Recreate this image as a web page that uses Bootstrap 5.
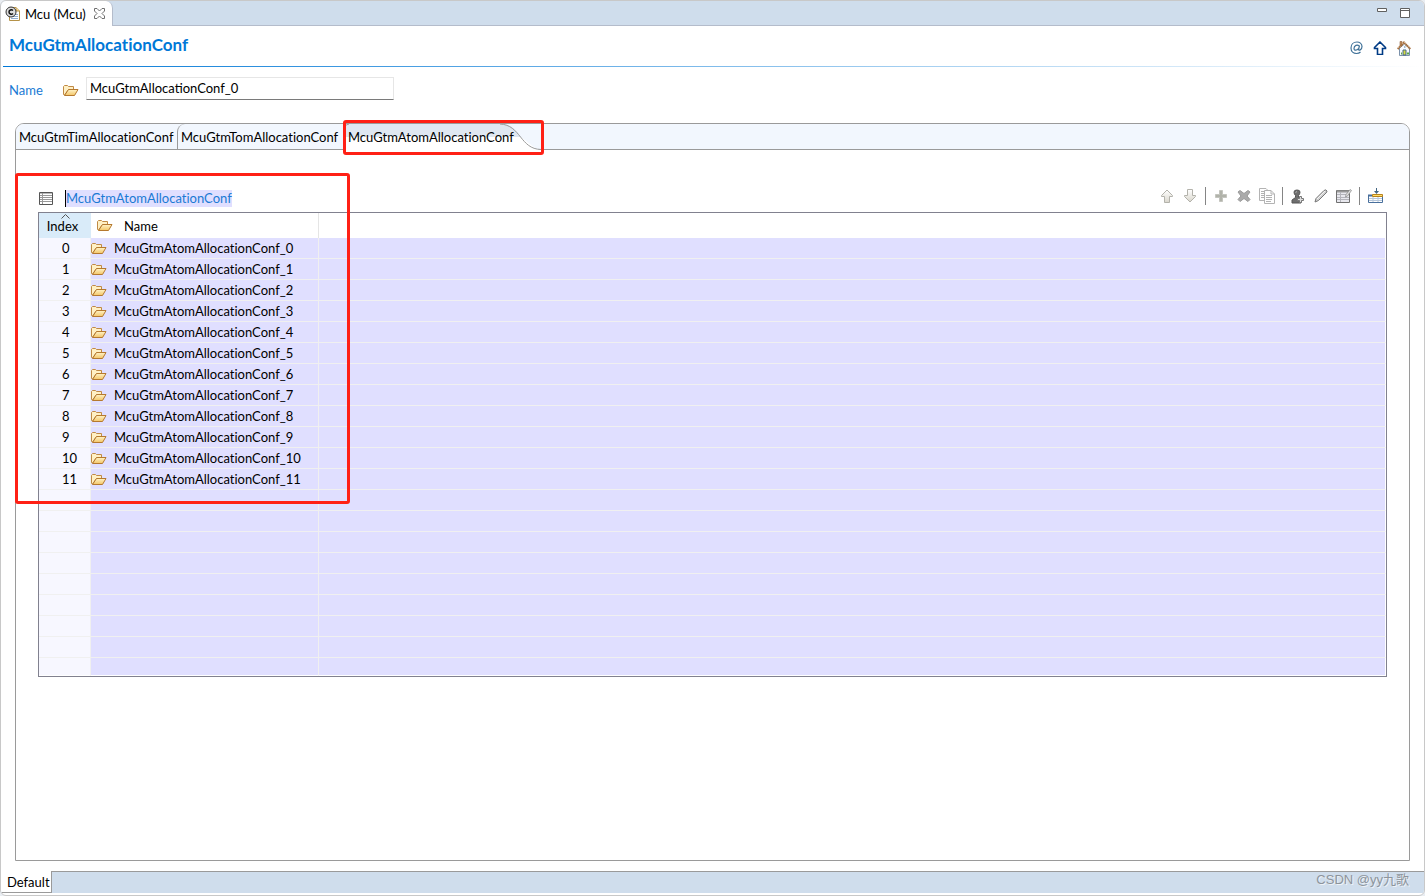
<!DOCTYPE html>
<html lang="en">
<head>
<meta charset="utf-8">
<meta name="viewport" content="width=device-width, initial-scale=1">
<title>McuGtmAllocationConf</title>
<link href="https://cdn.jsdelivr.net/npm/bootstrap@5.3.0/dist/css/bootstrap.min.css" rel="stylesheet">
<style>
  body { font-family: Lato, "Noto Sans CJK SC", sans-serif; font-size: 13px; line-height: 20px; font-variant-ligatures: none; color: #000; background: #e9edf2; }
  button { font: inherit; color: inherit; }
  svg { display: block; flex: none; }
  .editor { border: 1px solid #c8c8c8; border-radius: 6px; overflow: hidden; background: #fff; }
  .strip { background: #cfddec; height: 25px; border-bottom: 1px solid #b4bccb; }
  .editor-tab { background: #fff; height: 25px; width: 112px; gap: 4px; padding: 0 0 0 4px; border-right: 1px solid #b4bccb; border-radius: 5px 7px 0 0; white-space: nowrap; }
  .icon-btn { border: 0; background: none; padding: 0; }
  .window-buttons { gap: 13px; padding-right: 14px; }
  .heading { font-size: 17px; line-height: 22px; font-weight: 700; color: #0078d7; padding-bottom: 2px; }
  .page-links { gap: 8px; margin-right: 12px; }
  .page-links a, .tools .icon-btn { width: 16px; display: flex; justify-content: center; }
  .rule { height: 1px; background: linear-gradient(90deg, #0078d7, #fff); margin-left: 2px; }
  .name-row { padding: 9px 0 0 8px; }
  .name-label { color: #1a7ad4; width: 54px; }
  .icon-gap { margin-right: 7px; }
  .name-input { width: 308px; height: 23px; padding: 0 3px; border: 1px solid #e6e6e6; border-bottom-color: #7a7a7a; border-radius: 0; font-size: 13px; color: #000; background: #fff; }
  .folder { border: 1px solid #9a9a9a; border-radius: 9px 9px 0 0; margin: 23px 14px 10px; }
  .folder-tabs { background: #f2f7fe; height: 26px; border-bottom: 1px solid #9a9a9a; border-radius: 8px 8px 0 0; }
  .folder-tab { border: 0; background: none; height: 25px; padding: 0 0 0 3px; text-align: left; white-space: nowrap; }
  .tab-tim { width: 161px; }
  .tab-tom { width: 166px; border-left: 1px solid #9a9a9a; border-radius: 8px 0 0 0; }
  .tab-atom { width: 201px; height: 25px; padding-left: 5px; }
  .tab-shape { position: absolute; left: 0; top: 0; }
  .callout { position: absolute; border: 3px solid #ff2015; border-radius: 3px; pointer-events: none; z-index: 2; }
  .callout-tab { inset: -4px 0 -6px 0; }
  .callout-table { left: -1px; top: 23px; width: 335px; height: 331px; }
  .section-body { padding: 37px 22px 0; }
  .section-head { padding-top: 3px; }
  .section-title { color: #1a7ad4; background: #e0dfff; border-left: 1px solid #000; line-height: 17px; }
  .tools { gap: 7px; }
  .sep { width: 1px; height: 18px; background: #858585; }
  .conf-table { width: 100%; table-layout: fixed; border: 1px solid #81818f; border-collapse: separate; border-spacing: 0; margin-top: 5px; }
  .conf-table th { height: 25px; padding: 0; font-weight: 400; border-right: 1px solid #e5e5e5; vertical-align: middle; }
  .conf-table th:first-child { background: #d9ebf9; text-align: center; border-right: 0; padding-right: 5px; line-height: 20px; }
  .conf-table th:last-child { border-right: 0; }
  .conf-table td { height: 21px; padding: 0; background: #e0dfff; border-bottom: 1px solid #f0f0f0; border-right: 1px solid #f0f0f0; line-height: 20px; }
  .conf-table td:first-child { background: #f7f7ff; text-align: left; padding-left: 23px; }
  .conf-table td:last-child { border-right-color: #fff; }
  .conf-table tr:last-child td { height: 18px; border-bottom-color: #fff; }
  .head-cell { padding-left: 6px; }
  .sort-mark { position: absolute; left: 22px; top: 1px; }
  .bottom { height: 22px; background: #cfddec; border-top: 1px solid #9a9a9a; margin-bottom: 2px; }
  .bottom-tab { background: #fff; width: 51px; height: 22px; margin-top: -1px; padding: 0 0 0 6px; border: 0; border-right: 1px solid #9a9a9a; border-bottom: 1px solid #9a9a9a; text-align: left; line-height: 20px; }
  .watermark { font-family: "Liberation Sans", "Noto Sans CJK SC", sans-serif; font-size: 13px; line-height: 16px; color: #8d949c; text-shadow: 1px 1px 0 #eef2f6; margin-right: 15px; white-space: nowrap; }
</style>
</head>
<body>
<svg width="0" height="0" class="position-absolute" aria-hidden="true">
  <defs>
    <linearGradient id="gold" x1="0" y1="0" x2="0" y2="1"><stop offset="0" stop-color="#fff3c8"/><stop offset="1" stop-color="#f3c667"/></linearGradient>
    <linearGradient id="stone" x1="0" y1="0" x2="0" y2="1"><stop offset="0" stop-color="#fff"/><stop offset="1" stop-color="#d9d6cc"/></linearGradient>
    <symbol id="folder" viewBox="0 0 16 13">
      <path d="M.5 10.500V2.500L1.500 1.500H4.500L5.500 2.500H10.500V5.500H5.500L1.500 11Z" fill="#fff0c4" stroke="#c08a45"/>
      <path d="M1.500 11.500L5.500 5.500H15L11.500 11.500Z" fill="url(#gold)" stroke="#b5792f"/>
    </symbol>
    <symbol id="up" viewBox="0 0 14 14"><path d="M7 1L12.500 6.500V7.500H9.500V13.500H4.500V7.500H1.500V6.500Z"/></symbol>
  </defs>
</svg>
<div class="editor d-flex flex-column min-vh-100">
  <div class="strip d-flex">
    <div class="editor-tab d-flex align-items-center">
      <svg width="16" height="16" viewBox="0 0 16 16"><path d="M4.500 1.500H11L14.500 5V14.500H4.500Z" fill="#fff" stroke="#b59248"/><path d="M11 1.500V5H14.500" fill="#f6d996" stroke="#b59248"/><path d="M6 10.500H13M6 12.500H13M10 8.500H13" stroke="#91add0"/><circle cx="6" cy="6" r="5" fill="#ddd" stroke="#333"/><path d="M8 4.500C6.500 3 4 4 4 6S6.500 9 8 7.500" fill="none" stroke="#111" stroke-width="1.500"/></svg>
      <span>Mcu (Mcu)</span>
      <button class="icon-btn ms-1" aria-label="Close"><svg width="11" height="11" viewBox="0 0 11 11" fill="#fff" stroke="#707070"><path d="M.5.5H3L5.500 3 8 .5H10.500V3L8 5.500 10.500 8V10.500H8L5.500 8 3 10.500H.5V8L3 5.500.5 3Z"/></svg></button>
    </div>
    <div class="window-buttons ms-auto d-flex">
      <button class="icon-btn" aria-label="Minimize"><svg width="10" height="16" viewBox="0 0 10 16"><path d="M.5 3.500H9.500V6.500H.5Z" fill="#fff" stroke="#606060"/></svg></button>
      <button class="icon-btn" aria-label="Maximize"><svg width="10" height="16" viewBox="0 0 10 16"><path d="M.5 3.500H9.500V12.500H.5ZM0 5.500H10" fill="#fff" stroke="#606060"/></svg></button>
    </div>
  </div>
  <header class="d-flex justify-content-between align-items-center ps-2 py-2">
    <h1 class="heading m-0">McuGtmAllocationConf</h1>
    <div class="page-links d-flex align-items-center pt-1">
      <a href="#" aria-label="References"><svg width="15" height="14" viewBox="0 0 15 14" fill="none" stroke="#3f7198" stroke-width="1.200"><path d="M10.500 4.500L9.500 8.500C9.500 10 13 9 13 5.500C13 2.500 10.500 1 8 1C4.500 1 2 3.500 2 7C2 10.500 4.500 12.500 7.500 12.500C9 12.500 10.500 12 11.500 11"/><path d="M10 5C8.500 3 5 4.500 5 7.500C5 10 8 9.500 9.500 7.500"/></svg></a>
      <a href="#" aria-label="Up"><svg width="14" height="14" fill="#fff" stroke="#003b85" stroke-width="1.600"><use href="#up"/></svg></a>
      <a href="#" aria-label="Home"><svg width="14" height="15" viewBox="0 0 14 15"><path d="M2.500 7V14.500H12.500V7L7.500 3Z" fill="#f8fbff" stroke="#7b91aa"/><path d="M3 .5H5V5H3Z" fill="#c79463" stroke="#8b6040" stroke-width=".6"/><path d="M.7 8L7 1.500 13.300 8" fill="none" stroke="#a8703d" stroke-width="2" stroke-dasharray="1.500 .4"/><path d="M6 9H9V14H6Z" fill="#d6da43" stroke="#49698b"/><path d="M7 6H8.500" stroke="#4d80ad"/><path d="M4 12.500H5M10 12.500H12" stroke="#56a446" stroke-width="2"/></svg></a>
    </div>
  </header>
  <div class="rule"></div>
  <div class="name-row d-flex align-items-center">
    <label class="name-label pt-1" for="confName">Name</label>
    <svg width="16" height="13" class="icon-gap mt-1"><use href="#folder"/></svg>
    <input id="confName" class="name-input" value="McuGtmAllocationConf_0">
  </div>
  <main class="folder flex-grow-1 d-flex flex-column">
    <div class="folder-tabs d-flex" role="tablist">
      <button class="folder-tab tab-tim" role="tab">McuGtmTimAllocationConf</button>
      <button class="folder-tab tab-tom" role="tab">McuGtmTomAllocationConf</button>
      <div class="position-relative">
        <svg class="tab-shape" width="201" height="26" viewBox="0 0 201 26"><path d="M0 13V8Q0 0 5 0H162Q171 2 178 13Z" fill="#dfe7f1"/><path d="M0 13H178L187 20Q192 25 199 26H0Z" fill="#fff"/><path d="M.5 26V8Q.5 1 6 0M157 0C178 1 177 25 198 25.500" fill="none" stroke="#9a9a9a"/></svg>
        <button class="folder-tab tab-atom position-relative" role="tab" aria-selected="true">McuGtmAtomAllocationConf</button>
        <div class="callout callout-tab"></div>
      </div>
    </div>
    <div class="section-body position-relative">
      <div class="callout callout-table"></div>
      <div class="d-flex justify-content-between align-items-start">
        <div class="section-head d-flex align-items-center">
          <svg class="me-2" width="15" height="13" viewBox="0 0 15 13"><path d="M1.500.5H14.500V12.500H1.500Z" fill="#fff" stroke="#555"/><path d="M2 1.500H14" stroke="#bbb"/><path d="M2 3.500H14M2 5.500H14M2 7.500H14M2 9.500H14M4.500 1V12" stroke="#999"/></svg>
          <span class="section-title ms-1">McuGtmAtomAllocationConf</span>
        </div>
        <div class="tools d-flex align-items-center me-1">
          <button class="icon-btn" aria-label="Move up"><svg width="14" height="14" fill="url(#stone)" stroke="#b3b2ab"><use href="#up"/></svg></button>
          <button class="icon-btn" aria-label="Move down"><svg width="14" height="14" viewBox="0 0 14 14"><path d="M7 13L12.500 7.500V6.500H9.500V.5H4.500V6.500H1.500V7.500Z" fill="url(#stone)" stroke="#b3b2ab"/></svg></button>
          <span class="sep"></span>
          <button class="icon-btn" aria-label="Add"><svg width="14" height="14" viewBox="0 0 14 14"><path d="M5.500 1.500H8.500V5.500H12.500V8.500H8.500V12.500H5.500V8.500H1.500V5.500H5.500Z" fill="#b1b3aa" stroke="#c4c5bf"/></svg></button>
          <button class="icon-btn" aria-label="Delete"><svg width="14" height="14" viewBox="0 0 14 14"><path d="M1 3L3 1.500 7 4.500 11 1.500 13 3 10 7 13 10.500 11 12.500 7 9.500 3 12.500 1 10.500 4 7Z" fill="#aaa" stroke="#999"/></svg></button>
          <button class="icon-btn" aria-label="Duplicate"><svg width="16" height="16" viewBox="0 0 16 16" fill="#fff" stroke="#b3b3b3"><path d="M.5.500H7L9.500 3V12.500H.5Z"/><path d="M2 3.500H6M2 5.500H6M2 7.500H6M2 9.500H6"/><path d="M5.500 2.500H12L15.500 6V15.500H5.500ZM12 2.500V6H15.500M7 7.500H13M7 9.500H13M7 11.500H13M7 13.500H12"/></svg></button>
          <span class="sep"></span>
          <button class="icon-btn" aria-label="Import"><svg width="14" height="15" viewBox="0 0 14 15"><path d="M1 14V11L4.500 8.500V6.500Q3 5 3 3Q3 1 6 1T9 3Q9 5 7.500 6.500V8.500L10 11V14Z" fill="#6e6e6e" stroke="#555"/><path d="M4.500 3.500L6 2.500" stroke="#bbb"/><path d="M8.500 7.500H10.500V9.500H12.500V11.500H10.500V13.500H8.500V11.500H6.500V9.500H8.500Z" fill="#ddd" stroke="#777"/></svg></button>
          <button class="icon-btn" aria-label="Edit"><svg width="14" height="14" viewBox="0 0 14 14"><path d="M1 13L2 9.500 10 1.500Q12 0 13 2Q13 3 12 4L4.500 11.500Z" fill="#d2d2d2" stroke="#777"/><path d="M3 10L11 2" stroke="#f5f5f5"/></svg></button>
          <button class="icon-btn" aria-label="Edit table"><svg width="16" height="14" viewBox="0 0 16 14"><path d="M.5 1.500H13.500V13.500H.5Z" fill="#e8e8ee" stroke="#707070"/><path d="M1 2.500H13" stroke="#999" stroke-width="2"/><path d="M1 5.500H13M1 8.500H13M1 10.500H13M4.500 3V13" stroke="#b4b4bb"/><path d="M9.500 8L10 5.500 14 .500 15.500 1.500 11.500 7Z" fill="#ddd" stroke="#8a8a8a" stroke-width=".7"/></svg></button>
          <span class="sep"></span>
          <button class="icon-btn" aria-label="Insert columns"><svg width="15" height="16" viewBox="0 0 15 16"><path d="M8.500 0V4" stroke="#426582"/><path d="M6 3H11L8.500 6Z" fill="#426582"/><path d="M.5 7.500H14.500V14.500H.5Z" fill="#fff" stroke="#486f9c"/><path d="M1 10.500H14M1 12.500H14M5 8V14M10 8V14" stroke="#b7c8dc"/><path d="M4.500 6.500H14.500V8.500H4.500Z" fill="#ffe06a" stroke="#b9821c"/><path d="M0 7.500H4" stroke="#486f9c" stroke-width="2"/></svg></button>
        </div>
      </div>
      <table class="conf-table">
        <colgroup><col style="width:52px"><col style="width:228px"><col></colgroup>
        <thead><tr>
          <th scope="col" class="position-relative"><svg class="sort-mark" width="9" height="5" viewBox="0 0 9 5"><path d="M.5 4.500L4.500.5 8.500 4.500" fill="none" stroke="#555"/></svg>Index</th>
          <th scope="col"><div class="head-cell d-flex align-items-center"><svg width="16" height="13" class="icon-gap"><use href="#folder"/></svg><span class="ms-1">Name</span></div></th>
          <th></th>
        </tr></thead>
        <tbody id="rows"></tbody>
      </table>
    </div>
  </main>
  <footer class="bottom d-flex justify-content-between align-items-start">
    <button class="bottom-tab">Default</button>
    <span class="watermark">CSDN @yy九歌</span>
  </footer>
</div>
<script>
  const rows = document.getElementById('rows');
  for (let i = 0; i < 21; i++) {
    rows.insertAdjacentHTML('beforeend', i < 12
      ? `<tr><td>${i}</td><td><div class="d-flex align-items-center"><svg width="16" height="13" class="icon-gap"><use href="#folder"/></svg><span>McuGtmAtomAllocationConf_${i}</span></div></td><td></td></tr>`
      : '<tr><td></td><td></td><td></td></tr>');
  }
</script>
<script src="https://cdn.jsdelivr.net/npm/bootstrap@5.3.0/dist/js/bootstrap.bundle.min.js"></script>
</body>
</html>
